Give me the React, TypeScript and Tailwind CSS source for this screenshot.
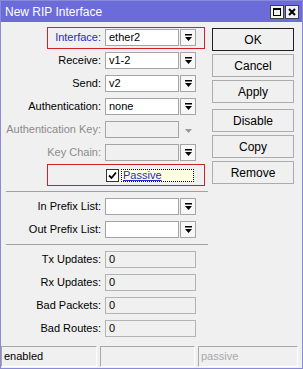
import React from 'react';

function DropArrow({ disabled }: { disabled?: boolean }) {
  return (
    <svg width="9" height="8" viewBox="0 0 9 8">
      {!disabled && <rect x="1" y="0" width="7" height="1.5" fill="#000" />}
      <polygon points="1,3 8,3 4.5,7" fill={disabled ? '#9a9a9a' : '#000'} />
    </svg>
  );
}

interface FieldRowProps {
  label: string;
  value?: string;
  kind?: 'combo' | 'combo-off' | 'combo-disabled' | 'readonly';
  labelClass?: string;
}

function FieldRow({ label, value = '', kind = 'combo', labelClass = 'text-black' }: FieldRowProps) {
  const inputBg = kind === 'combo' ? 'bg-white' : 'bg-[#f0f0f0]';
  return (
    <div className="flex items-center h-[23px]">
      <div className={`w-[100px] text-right whitespace-nowrap ${labelClass}`}>{label}</div>
      {kind === 'readonly' ? (
        <div className="ml-[4px] w-[91px] h-[17px] border border-[#b4b4b4] bg-[#f0f0f0] flex items-center pl-[3px]">
          {value}
        </div>
      ) : (
        <>
          <div className={`ml-[4px] w-[74px] h-[17px] border border-[#a5a5a5] ${inputBg} flex items-center pl-[3px]`}>
            {value}
          </div>
          {kind === 'combo-disabled' ? (
            <div className="ml-[1px] w-[16px] h-[17px] flex items-center justify-center">
              <DropArrow disabled />
            </div>
          ) : (
            <div className="ml-[1px] w-[16px] h-[17px] border border-[#a5a5a5] bg-[#f7f7f7] flex items-center justify-center">
              <DropArrow />
            </div>
          )}
        </>
      )}
    </div>
  );
}

function Btn({ label, primary }: { label: string; primary?: boolean }) {
  return (
    <div
      className={`w-[82px] h-[23px] flex items-center justify-center bg-[#f0f0f0] border ${
        primary ? 'border-[#202020]' : 'border-[#adadad]'
      } text-[12px]`}
    >
      {label}
    </div>
  );
}

export default function App() {
  return (
    <div
      className="w-[303px] h-[369px] flex flex-col bg-[#f0f0f0] text-[11px] text-black border border-[#8a8ad8] overflow-hidden"
      style={{ fontFamily: '"Liberation Sans", Arial, sans-serif' }}
    >
      {/* title bar */}
      <div className="h-[21px] bg-[#6b6bd9] flex items-center justify-between pl-[4px] pr-[3px] shrink-0">
        <span className="text-white text-[12px]">New RIP Interface</span>
        <div className="flex gap-[1px]">
          <div className="w-[14px] h-[14px] bg-[#f2f2f2] border border-[#404040] flex items-center justify-center">
            <div className="w-[8px] h-[8px] border border-black border-t-2" />
          </div>
          <div className="w-[14px] h-[14px] bg-[#f2f2f2] border border-[#404040] flex items-center justify-center">
            <svg width="8" height="8" viewBox="0 0 8 8">
              <path d="M1 1 L7 7 M7 1 L1 7" stroke="#000" strokeWidth="2" />
            </svg>
          </div>
        </div>
      </div>

      {/* body */}
      <div className="flex flex-1 pt-[4px]">
        <div className="w-[210px] flex flex-col">
          <div className="relative">
            <div className="absolute left-[46px] top-[1px] w-[158px] h-[22px] border border-[#d0202a]" />
            <FieldRow label="Interface:" value="ether2" labelClass="text-[#2828c8]" />
          </div>
          <FieldRow label="Receive:" value="v1-2" />
          <FieldRow label="Send:" value="v2" />
          <FieldRow label="Authentication:" value="none" />
          <FieldRow label="Authentication Key:" kind="combo-disabled" labelClass="text-[#8c8c8c]" />
          <FieldRow label="Key Chain:" kind="combo-off" labelClass="text-[#8c8c8c]" />
          <div className="relative flex items-center h-[23px]">
            <div className="absolute left-[46px] top-[0px] w-[158px] h-[22px] border border-[#d0202a]" />
            <div className="ml-[105px] w-[13px] h-[13px] bg-white border border-[#333] flex items-center justify-center">
              <svg width="9" height="9" viewBox="0 0 9 9">
                <path d="M1 4.5 L3.5 7 L8 1.5" stroke="#000" strokeWidth="1.8" fill="none" />
              </svg>
            </div>
            <div className="ml-[2px] w-[73px] h-[13px] bg-[#ffffe1] border border-dotted border-black flex items-center pl-[1px]">
              <span className="text-[#2828c8] underline leading-none">Passive</span>
            </div>
          </div>

          <div className="mt-[4px] mb-[3px] ml-[5px] w-[202px] border-t border-[#a0a0a0]" />

          <FieldRow label="In Prefix List:" />
          <FieldRow label="Out Prefix List:" />

          <div className="mt-[3px] mb-[3px] ml-[5px] w-[202px] border-t border-[#a0a0a0]" />

          <FieldRow label="Tx Updates:" value="0" kind="readonly" />
          <FieldRow label="Rx Updates:" value="0" kind="readonly" />
          <FieldRow label="Bad Packets:" value="0" kind="readonly" />
          <FieldRow label="Bad Routes:" value="0" kind="readonly" />
        </div>

        <div className="flex flex-col pt-[2px] ml-[1px]">
          <div className="flex flex-col gap-[3px]">
            <Btn label="OK" primary />
            <Btn label="Cancel" />
            <Btn label="Apply" />
          </div>
          <div className="flex flex-col gap-[3px] mt-[6px]">
            <Btn label="Disable" />
            <Btn label="Copy" />
            <Btn label="Remove" />
          </div>
        </div>
      </div>

      {/* status bar */}
      <div className="h-[22px] flex gap-[3px] pb-[1px] shrink-0">
        <div className="w-[96px] border border-[#a8a8a8] border-r-white border-b-white flex items-center pl-[2px]">
          enabled
        </div>
        <div className="w-[95px] border border-[#a8a8a8] border-r-white border-b-white" />
        <div className="w-[100px] border border-[#a8a8a8] border-r-white border-b-white flex items-center pl-[2px] text-[#a8a8a8]">
          passive
        </div>
      </div>
    </div>
  );
}
